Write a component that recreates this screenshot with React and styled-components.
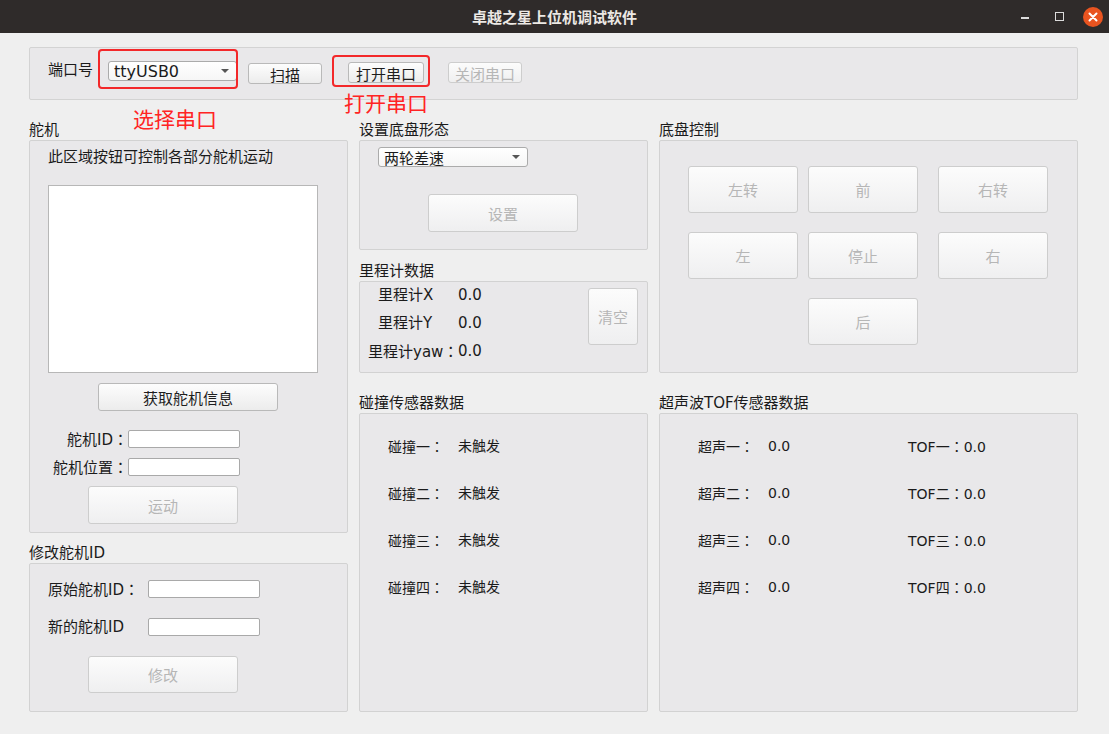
import React from 'react'
import styled, { createGlobalStyle } from 'styled-components'

const GlobalStyle = createGlobalStyle`
  html, body {
    margin: 0;
    padding: 0;
  }
  body {
    background: #efefef;
    font-family: "DejaVu Sans", "Noto Sans CJK SC", sans-serif;
    font-size: 15px;
    color: #1b1b1b;
  }
`

const Window = styled.div`
  width: 1109px;
  height: 734px;
  overflow: hidden;
  background: #efefef;
`

const TitleBar = styled.div`
  height: 33px;
  background: #2f2b2a;
  display: grid;
  grid-template-columns: 1fr auto 1fr;
  align-items: center;
`

const Title = styled.div`
  grid-column: 2;
  color: #ece9e5;
  font-family: "Noto Sans CJK SC", sans-serif;
  font-weight: bold;
  font-size: 15px;
`

const Controls = styled.div`
  justify-self: end;
  display: flex;
  align-items: center;
  gap: 14px;
  padding-right: 6px;
`

const Slot = styled.div`
  width: 20px;
  height: 20px;
  display: flex;
  align-items: center;
  justify-content: center;
`

const MinLine = styled.span`
  width: 8px;
  height: 2px;
  margin-top: 3px;
  background: #dcdcdc;
`

const MaxBox = styled.span`
  width: 7px;
  height: 7px;
  border: 1px solid #dcdcdc;
`

const CloseDot = styled(Slot)`
  border-radius: 50%;
  background: #e95420;
`

const Content = styled.div`
  padding: 14px 31px 0 29px;
`

const PortBar = styled.div`
  box-sizing: border-box;
  height: 53px;
  border: 1px solid #d3d3d3;
  border-radius: 2px;
  background: #e9e8ea;
  display: flex;
  align-items: flex-start;
  padding: 13px 0 0 18px;
`

const PortLabel = styled.div`
  width: 60px;
  line-height: 18px;
  font-size: 15px;
`

const Marked = styled.div`
  position: relative;
  flex: none;
  margin-left: ${p => p.$ml || 0}px;
  margin-top: ${p => p.$mt || 0}px;
`

const RedFrame = styled.div`
  position: absolute;
  left: ${p => p.$x}px;
  top: ${p => p.$y}px;
  width: ${p => p.$w}px;
  height: ${p => p.$h}px;
  box-sizing: border-box;
  border: 2.5px solid #f3282a;
  border-radius: 4px;
  pointer-events: none;
`

const RedNote = styled.div`
  position: absolute;
  left: ${p => p.$x}px;
  top: ${p => p.$y}px;
  color: #ff2424;
  font-family: "Noto Sans CJK SC", sans-serif;
  font-size: 21px;
  line-height: 24px;
  white-space: nowrap;
`

const Combo = styled.div`
  position: relative;
  box-sizing: border-box;
  width: ${p => p.$w}px;
  height: ${p => p.$h}px;
  display: flex;
  align-items: center;
  padding-left: 5px;
  background: linear-gradient(#ffffff, #f6f6f6);
  border: 1px solid #ababab;
  border-radius: 3px;
  font-size: ${p => p.$fs}px;
  &::after {
    content: '';
    position: absolute;
    right: 7px;
    top: 50%;
    margin-top: -2px;
    border-left: 4px solid transparent;
    border-right: 4px solid transparent;
    border-top: 4px solid #555;
  }
`

const Btn = styled.button`
  box-sizing: border-box;
  flex: none;
  width: ${p => p.$w}px;
  height: ${p => p.$h}px;
  margin: ${p => p.$mt || 0}px 0 0 ${p => p.$ml || 0}px;
  padding: 0;
  font: inherit;
  font-family: "Noto Sans CJK SC", sans-serif;
  font-size: 15px;
  color: #1e1e1e;
  background: linear-gradient(#fdfdfd, #ececec);
  border: 1px solid #b9b9b9;
  border-radius: 3px;
  &:disabled {
    color: #b6b6b6;
    border-color: #cdcdcd;
    background: linear-gradient(#fcfcfc, #efeff0);
  }
`

const DriveBtn = styled(Btn)`
  grid-column: ${p => p.$col || 'auto'};
`

const Columns = styled.div`
  margin-top: 20px;
  display: flex;
  gap: 11px;
`

const Column = styled.div`
  width: ${p => p.$w}px;
  display: flex;
  flex-direction: column;
`

const GroupTitle = styled.div`
  height: 20px;
  line-height: 20px;
  font-size: 15px;
  white-space: nowrap;
  margin-top: ${p => p.$mt || 0}px;
`

const Panel = styled.div`
  box-sizing: border-box;
  height: ${p => p.$h}px;
  border: 1px solid #d2d2d2;
  border-radius: 2px;
  background: #e9e8ea;
`

const StackPanel = styled(Panel)`
  display: flex;
  flex-direction: column;
  align-items: flex-start;
  padding: ${p => p.$pt}px 0 0 18px;
`

const Hint = styled.div`
  line-height: 20px;
  font-size: 15px;
`

const ListBox = styled.div`
  box-sizing: border-box;
  margin-top: 18px;
  width: 270px;
  height: 188px;
  background: #fff;
  border: 1px solid #b7b7b7;
`

const FormGrid = styled.div`
  display: grid;
  grid-template-columns: ${p => p.$label}px 112px;
  grid-auto-rows: 18px;
  row-gap: ${p => p.$gap}px;
  margin-top: ${p => p.$mt || 0}px;
`

const FieldLabel = styled.div`
  height: 18px;
  line-height: 18px;
  font-size: 15px;
  white-space: nowrap;
  text-align: ${p => p.$align || 'left'};
`

const Colon = styled.span`
  font-family: "Noto Sans CJK JP", sans-serif;
`

const Field = styled.input`
  box-sizing: border-box;
  width: 112px;
  height: 18px;
  padding: 0;
  border: 1px solid #a9a9a9;
  border-radius: 2px;
  background: #fff;
`

const OdoPanel = styled(Panel)`
  display: flex;
  justify-content: space-between;
  align-items: flex-start;
  padding: 3px 9px 0 8px;
`

const OdoRows = styled.div`
  display: flex;
  flex-direction: column;
  gap: 8px;
`

const OdoRow = styled.div`
  display: flex;
  height: 20px;
  line-height: 20px;
  font-size: 15px;
`

const OdoKey = styled.span`
  box-sizing: border-box;
  width: 90px;
  padding-left: ${p => p.$indent || 0}px;
  white-space: nowrap;
`

const DrivePanel = styled(Panel)`
  display: grid;
  grid-template-columns: 110px 120px 110px;
  grid-auto-rows: 47px;
  gap: 19px 10px;
  align-content: start;
  padding: 25px 0 0 28px;
`

const SensorPanel = styled(Panel)`
  display: grid;
  grid-template-columns: ${p => p.$cols};
  grid-auto-rows: 20px;
  row-gap: 27px;
  align-content: start;
  padding: 22px 0 0 ${p => p.$pl}px;
  line-height: 20px;
  font-size: 14px;
  white-space: nowrap;
`

const bumps = ['一', '二', '三', '四']

function App() {
  return (
    <Window>
      <GlobalStyle />
      <TitleBar>
        <Title>卓越之星上位机调试软件</Title>
        <Controls>
          <Slot><MinLine /></Slot>
          <Slot><MaxBox /></Slot>
          <CloseDot>
            <svg width="10" height="10" viewBox="0 0 10 10">
              <path d="M1.5 1.5 L8.5 8.5 M8.5 1.5 L1.5 8.5" stroke="#fff" strokeWidth="2" strokeLinecap="round" />
            </svg>
          </CloseDot>
        </Controls>
      </TitleBar>

      <Content>
        <PortBar>
          <PortLabel>端口号</PortLabel>
          <Marked>
            <Combo $w={129} $h={20} $fs={16}>ttyUSB0</Combo>
            <RedFrame $x={-10} $y={-12} $w={140} $h={40} />
            <RedNote $x={25} $y={45}>选择串口</RedNote>
          </Marked>
          <Btn $w={74} $h={21} $ml={11} $mt={2}>扫描</Btn>
          <Marked $ml={26} $mt={1}>
            <Btn $w={76} $h={21}>打开串口</Btn>
            <RedFrame $x={-16} $y={-7} $w={98} $h={32} />
            <RedNote $x={-4} $y={28}>打开串口</RedNote>
          </Marked>
          <Btn $w={74} $h={21} $ml={24} $mt={1} disabled>关闭串口</Btn>
        </PortBar>

        <Columns>
          <Column $w={319}>
            <GroupTitle>舵机</GroupTitle>
            <StackPanel $h={393} $pt={6}>
              <Hint>此区域按钮可控制各部分舵机运动</Hint>
              <ListBox />
              <Btn $w={180} $h={28} $mt={10} $ml={50}>获取舵机信息</Btn>
              <FormGrid $label={80} $gap={10} $mt={19}>
                <FieldLabel $align="right">舵机ID<Colon>：</Colon></FieldLabel>
                <Field />
                <FieldLabel $align="right">舵机位置<Colon>：</Colon></FieldLabel>
                <Field />
              </FormGrid>
              <Btn $w={150} $h={38} $mt={10} $ml={40} disabled>运动</Btn>
            </StackPanel>

            <GroupTitle $mt={10}>修改舵机ID</GroupTitle>
            <StackPanel $h={149} $pt={16}>
              <FormGrid $label={100} $gap={20}>
                <FieldLabel>原始舵机ID<Colon>：</Colon></FieldLabel>
                <Field />
                <FieldLabel>新的舵机ID</FieldLabel>
                <Field />
              </FormGrid>
              <Btn $w={150} $h={37} $mt={20} $ml={40} disabled>修改</Btn>
            </StackPanel>
          </Column>

          <Column $w={289}>
            <GroupTitle>设置底盘形态</GroupTitle>
            <StackPanel $h={110} $pt={6}>
              <Combo $w={150} $h={20} $fs={15}>两轮差速</Combo>
              <Btn $w={150} $h={38} $mt={27} $ml={50} disabled>设置</Btn>
            </StackPanel>

            <GroupTitle $mt={11}>里程计数据</GroupTitle>
            <OdoPanel $h={92}>
              <OdoRows>
                <OdoRow><OdoKey $indent={10}>里程计X</OdoKey><span>0.0</span></OdoRow>
                <OdoRow><OdoKey $indent={10}>里程计Y</OdoKey><span>0.0</span></OdoRow>
                <OdoRow><OdoKey>里程计yaw<Colon>：</Colon></OdoKey><span>0.0</span></OdoRow>
              </OdoRows>
              <Btn $w={50} $h={57} $mt={3} disabled>清空</Btn>
            </OdoPanel>

            <GroupTitle $mt={20}>碰撞传感器数据</GroupTitle>
            <SensorPanel $h={299} $cols="70px auto" $pl={28}>
              {bumps.map(n => (
                <React.Fragment key={n}>
                  <span>碰撞{n}<Colon>：</Colon></span>
                  <span>未触发</span>
                </React.Fragment>
              ))}
            </SensorPanel>
          </Column>

          <Column $w={419}>
            <GroupTitle>底盘控制</GroupTitle>
            <DrivePanel $h={233}>
              <DriveBtn $w={110} $h={47} disabled>左转</DriveBtn>
              <DriveBtn $w={110} $h={47} disabled>前</DriveBtn>
              <DriveBtn $w={110} $h={47} disabled>右转</DriveBtn>
              <DriveBtn $w={110} $h={47} disabled>左</DriveBtn>
              <DriveBtn $w={110} $h={47} disabled>停止</DriveBtn>
              <DriveBtn $w={110} $h={47} disabled>右</DriveBtn>
              <DriveBtn $w={110} $h={47} $col={2} disabled>后</DriveBtn>
            </DrivePanel>

            <GroupTitle $mt={20}>超声波TOF传感器数据</GroupTitle>
            <SensorPanel $h={299} $cols="70px 140px auto" $pl={38}>
              {bumps.map(n => (
                <React.Fragment key={n}>
                  <span>超声{n}<Colon>：</Colon></span>
                  <span>0.0</span>
                  <span>TOF{n}<Colon>：</Colon>0.0</span>
                </React.Fragment>
              ))}
            </SensorPanel>
          </Column>
        </Columns>
      </Content>
    </Window>
  )
}

export default App
